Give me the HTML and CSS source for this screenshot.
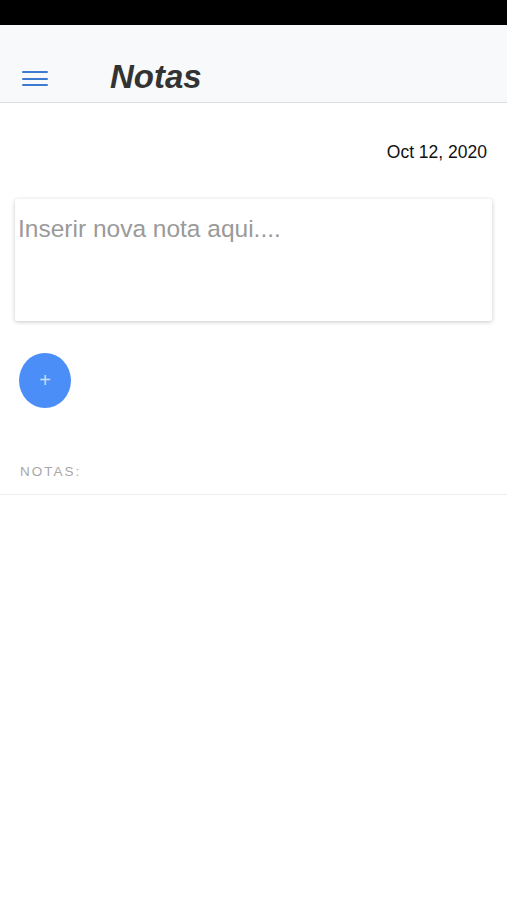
FILE: index.html
```html
<!DOCTYPE html>
<html lang="en">
<head>
    <meta charset="UTF-8">
    <meta name="viewport" content="width=device-width, initial-scale=1.0">
    <title>Notas</title>
    <link rel="stylesheet" href="styles.css">
</head>
<body>
<div class="statusBar"></div>
<div class="header">
    <div class="menuButton">
        <span></span><span></span><span></span>
    </div>
    <div class="title">Notas</div>
</div>
<div class="content">
    <div class="date">Oct 12, 2020</div>
    <div class="noteCard">
        <textarea class="noteInput" placeholder="Inserir nova nota aqui...."></textarea>
    </div>
    <div class="addButton">+</div>
    <div class="listLabel">NOTAS:</div>
</div>
<div class="divider"></div>
</body>
</html>
```

FILE: styles.css
```css
body {
    margin: 0;
    background-color: #fff;
    font-family: "Liberation Sans", Arial, sans-serif;
    color: #1a1a1a;
}
.statusBar {
    height: 25px;
    background-color: #000;
}
.header {
    height: 78px;
    background-color: #f8f9fb;
    border-bottom: 1px solid #dcdedf;
    display: flex;
    align-items: flex-end;
    padding-left: 22px;
    padding-bottom: 10px;
    box-sizing: border-box;
}
.menuButton {
    width: 26px;
    display: flex;
    flex-direction: column;
    gap: 4.5px;
    margin-bottom: 6px;
}
.menuButton span {
    display: block;
    height: 2px;
    background-color: #3c7bd0;
    border-radius: 1px;
}
.title {
    margin-left: 62px;
    font-size: 33px;
    font-weight: bold;
    font-style: italic;
    color: #333;
    line-height: 31px;
}
.content {
    padding: 0 20px 0 15px;
}
.date {
    text-align: right;
    font-size: 17.5px;
    margin-top: 40px;
    line-height: 18px;
    color: #111;
}
.noteCard {
    margin-top: 38px;
    margin-right: -5px;
    height: 122px;
    background-color: #fff;
    box-shadow: 0 1px 4px rgba(0, 0, 0, 0.22);
    border-radius: 2px;
}
.noteInput {
    width: 100%;
    height: 100%;
    box-sizing: border-box;
    border: none;
    outline: none;
    resize: none;
    padding: 16px 3px;
    font-family: "Liberation Sans", Arial, sans-serif;
    font-size: 24.5px;
    background: transparent;
}
.noteInput::placeholder {
    color: #9a9a9a;
}
.addButton {
    margin-top: 32px;
    margin-left: 4px;
    width: 52px;
    height: 55px;
    border-radius: 50%;
    background-color: #4b8ef8;
    color: #c9dcfb;
    font-size: 20px;
    font-weight: 300;
    display: flex;
    align-items: center;
    justify-content: center;
}
.listLabel {
    margin-top: 56px;
    margin-left: 5px;
    font-size: 13.5px;
    letter-spacing: 2px;
    color: #a8a8a8;
}
.divider {
    margin-top: 15px;
    border-top: 1px solid #eeeeee;
}
```
